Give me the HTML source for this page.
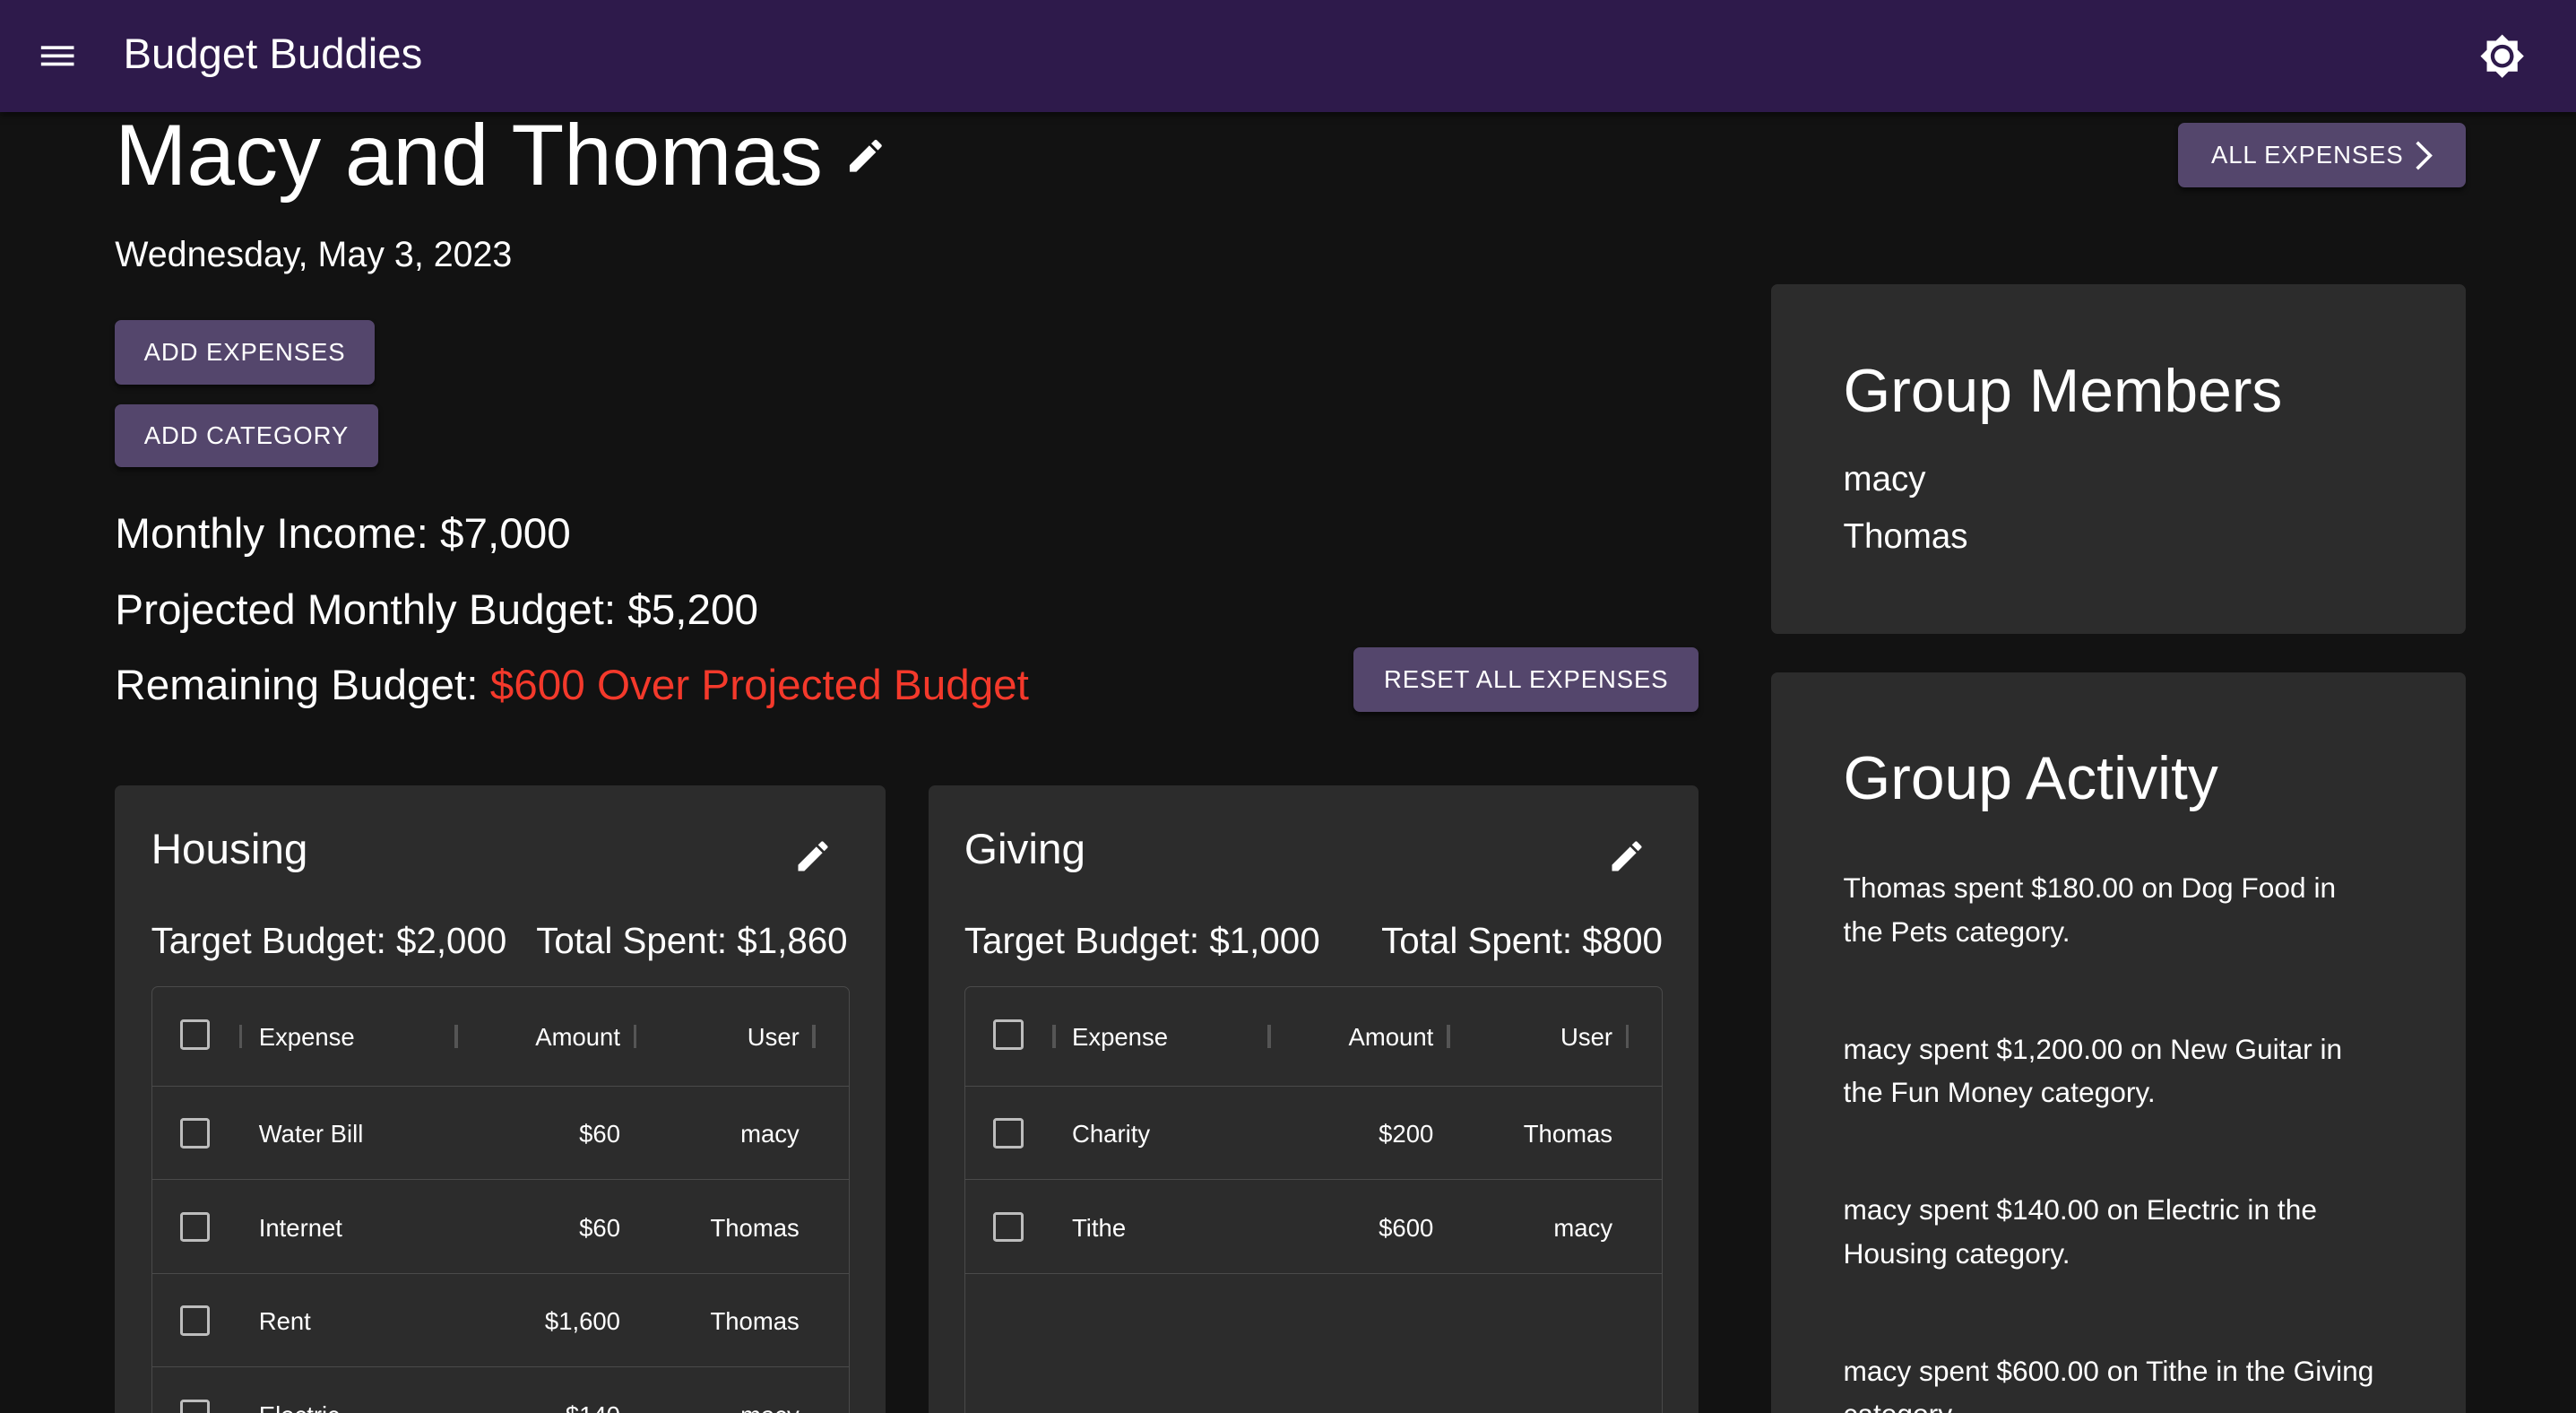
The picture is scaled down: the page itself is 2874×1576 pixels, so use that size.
<!DOCTYPE html>
<html><head><meta charset="utf-8"><style>
html,body{margin:0;padding:0;background:#121212;overflow:hidden;width:2874px;height:1576px}
#w{position:absolute;left:0;top:0;width:1568px;height:860px;zoom:1.83291;font-family:"Liberation Sans",sans-serif;color:#fff;background:#121212;overflow:hidden}
.a{position:absolute;white-space:nowrap}
.bar{left:0;top:0;width:1568px;height:68px;background:#2e1a4b;box-shadow:0 2px 4px rgba(0,0,0,.5)}
.btn{position:absolute;background:#54466c;border-radius:4px;font-size:15px;letter-spacing:.5px;display:flex;align-items:center;justify-content:center;box-shadow:0 2px 3px rgba(0,0,0,.5)}
.card{position:absolute;background:#2c2c2c;border-radius:4px}
.tbl{position:absolute;border:1px solid #4a4a4a;border-radius:4px;border-bottom:none}
.row{position:absolute;left:0;right:0;border-bottom:1px solid #4a4a4a;font-size:15px}
.cb{position:absolute;width:15px;height:15px;border:2px solid #bdbdbd;border-radius:2px}
.sep{position:absolute;width:2px;height:14px;background:#555}
</style></head><body><div id="w">
<div class="a bar"></div>
<svg class="a" style="left:24px;top:24px" width="22" height="20" viewBox="0 0 22 20"><rect x="1" y="4" width="20" height="2" fill="#fff"/><rect x="1" y="9" width="20" height="2" fill="#fff"/><rect x="1" y="14" width="20" height="2" fill="#fff"/></svg>
<div class="a" style="left:75px;top:18px;font-size:25.8px">Budget Buddies</div>
<svg class="a" style="left:1509px;top:20px" width="28" height="28" viewBox="0 0 24 24"><path fill="#fff" d="M20 8.69V4h-4.69L12 .69 8.69 4H4v4.69L.69 12 4 15.31V20h4.69L12 23.31 15.31 20H20v-4.69L23.31 12 20 8.69zM12 18c-3.31 0-6-2.69-6-6s2.69-6 6-6 6 2.69 6 6-2.69 6-6 6zm0-10c-2.21 0-4 1.79-4 4s1.79 4 4 4 4-1.79 4-4-1.79-4-4-4z"/></svg>

<div class="a" style="left:70px;top:65px;font-size:52.5px">Macy and Thomas</div>
<svg class="a" style="left:514px;top:82px" width="26" height="26" viewBox="0 0 24 24"><path fill="#fff" d="M3 17.25V21h3.75L17.81 9.94l-3.75-3.75L3 17.25zM20.71 7.04a1 1 0 000-1.41l-2.34-2.34a1 1 0 00-1.41 0l-1.83 1.83 3.75 3.75 1.83-1.83z"/></svg>
<div class="btn" style="left:1326px;top:75px;width:175px;height:39px">ALL EXPENSES <svg style="margin-left:6px" width="12" height="18" viewBox="0 0 12 18"><path d="M2 1l8 8-8 8" stroke="#fff" stroke-width="2" fill="none"/></svg></div>
<div class="a" style="left:70px;top:143px;font-size:21.5px">Wednesday, May 3, 2023</div>
<div class="btn" style="left:70px;top:195px;width:158px;height:39px">ADD EXPENSES</div>
<div class="btn" style="left:70px;top:246px;width:160px;height:38px">ADD CATEGORY</div>
<div class="a" style="left:70px;top:310px;font-size:26px">Monthly Income: $7,000</div>
<div class="a" style="left:70px;top:356px;font-size:26px">Projected Monthly Budget: $5,200</div>
<div class="a" style="left:70px;top:402px;font-size:26px">Remaining Budget: <span style="color:#f4392b">$600 Over Projected Budget</span></div>
<div class="btn" style="left:824px;top:394px;width:210px;height:39px">RESET ALL EXPENSES</div>

<!-- Housing -->
<div class="card" style="left:70px;top:478px;width:469px;height:400px">
<div class="a" style="left:22px;top:24px;font-size:26px">Housing</div>
<svg class="a" style="left:413px;top:31px" width="24" height="24" viewBox="0 0 24 24"><path fill="#fff" d="M3 17.25V21h3.75L17.81 9.94l-3.75-3.75L3 17.25zM20.71 7.04a1 1 0 000-1.41l-2.34-2.34a1 1 0 00-1.41 0l-1.83 1.83 3.75 3.75 1.83-1.83z"/></svg>
<div class="a" style="left:22px;top:82px;font-size:22px">Target Budget: $2,000&nbsp;&nbsp; Total Spent: $1,860</div>
<div class="tbl" style="left:22px;top:122px;width:424px;height:300px">
<div class="row" style="top:0;height:60px"><div class="cb" style="left:17px;top:20px"></div><div class="sep" style="left:53px;top:23px"></div><div class="a" style="left:65px;top:22px">Expense</div><div class="sep" style="left:184px;top:23px"></div><div class="a" style="right:139px;top:22px">Amount</div><div class="sep" style="left:293px;top:23px"></div><div class="a" style="right:30px;top:22px">User</div><div class="sep" style="left:402px;top:23px"></div></div>
<div class="row" style="top:61px;height:56px"><div class="cb" style="left:17px;top:19px"></div><div class="a" style="left:65px;top:20px">Water Bill</div><div class="a" style="right:139px;top:20px">$60</div><div class="a" style="right:30px;top:20px">macy</div></div>
<div class="row" style="top:118px;height:56px"><div class="cb" style="left:17px;top:19px"></div><div class="a" style="left:65px;top:20px">Internet</div><div class="a" style="right:139px;top:20px">$60</div><div class="a" style="right:30px;top:20px">Thomas</div></div>
<div class="row" style="top:175px;height:56px"><div class="cb" style="left:17px;top:19px"></div><div class="a" style="left:65px;top:20px">Rent</div><div class="a" style="right:139px;top:20px">$1,600</div><div class="a" style="right:30px;top:20px">Thomas</div></div>
<div class="row" style="top:232px;height:56px"><div class="cb" style="left:17px;top:19px"></div><div class="a" style="left:65px;top:20px">Electric</div><div class="a" style="right:139px;top:20px">$140</div><div class="a" style="right:30px;top:20px">macy</div></div>
</div></div>

<!-- Giving -->
<div class="card" style="left:565px;top:478px;width:469px;height:400px">
<div class="a" style="left:22px;top:24px;font-size:26px">Giving</div>
<svg class="a" style="left:413px;top:31px" width="24" height="24" viewBox="0 0 24 24"><path fill="#fff" d="M3 17.25V21h3.75L17.81 9.94l-3.75-3.75L3 17.25zM20.71 7.04a1 1 0 000-1.41l-2.34-2.34a1 1 0 00-1.41 0l-1.83 1.83 3.75 3.75 1.83-1.83z"/></svg>
<div class="a" style="left:22px;top:82px;font-size:22px">Target Budget: $1,000</div>
<div class="a" style="right:22px;top:82px;font-size:22px">Total Spent: $800</div>
<div class="tbl" style="left:22px;top:122px;width:424px;height:300px">
<div class="row" style="top:0;height:60px"><div class="cb" style="left:17px;top:20px"></div><div class="sep" style="left:53px;top:23px"></div><div class="a" style="left:65px;top:22px">Expense</div><div class="sep" style="left:184px;top:23px"></div><div class="a" style="right:139px;top:22px">Amount</div><div class="sep" style="left:293px;top:23px"></div><div class="a" style="right:30px;top:22px">User</div><div class="sep" style="left:402px;top:23px"></div></div>
<div class="row" style="top:61px;height:56px"><div class="cb" style="left:17px;top:19px"></div><div class="a" style="left:65px;top:20px">Charity</div><div class="a" style="right:139px;top:20px">$200</div><div class="a" style="right:30px;top:20px">Thomas</div></div>
<div class="row" style="top:118px;height:56px"><div class="cb" style="left:17px;top:19px"></div><div class="a" style="left:65px;top:20px">Tithe</div><div class="a" style="right:139px;top:20px">$600</div><div class="a" style="right:30px;top:20px">macy</div></div>
</div></div>

<!-- right -->
<div class="card" style="left:1078px;top:173px;width:423px;height:213px">
<div class="a" style="left:44px;top:44px;font-size:37px">Group Members</div>
<div class="a" style="left:44px;top:107px;font-size:21px">macy</div>
<div class="a" style="left:44px;top:142px;font-size:21px">Thomas</div>
</div>
<div class="card" style="left:1078px;top:409px;width:423px;height:480px">
<div class="a" style="left:44px;top:44px;font-size:37px">Group Activity</div>
<div class="a" style="left:44px;top:118px;font-size:17.3px;line-height:26.5px">Thomas spent $180.00 on Dog Food in<br>the Pets category.</div>
<div class="a" style="left:44px;top:216px;font-size:17.3px;line-height:26.5px">macy spent $1,200.00 on New Guitar in<br>the Fun Money category.</div>
<div class="a" style="left:44px;top:314px;font-size:17.3px;line-height:26.5px">macy spent $140.00 on Electric in the<br>Housing category.</div>
<div class="a" style="left:44px;top:412px;font-size:17.3px;line-height:26.5px">macy spent $600.00 on Tithe in the Giving<br>category.</div>
</div>
</div></body></html>
